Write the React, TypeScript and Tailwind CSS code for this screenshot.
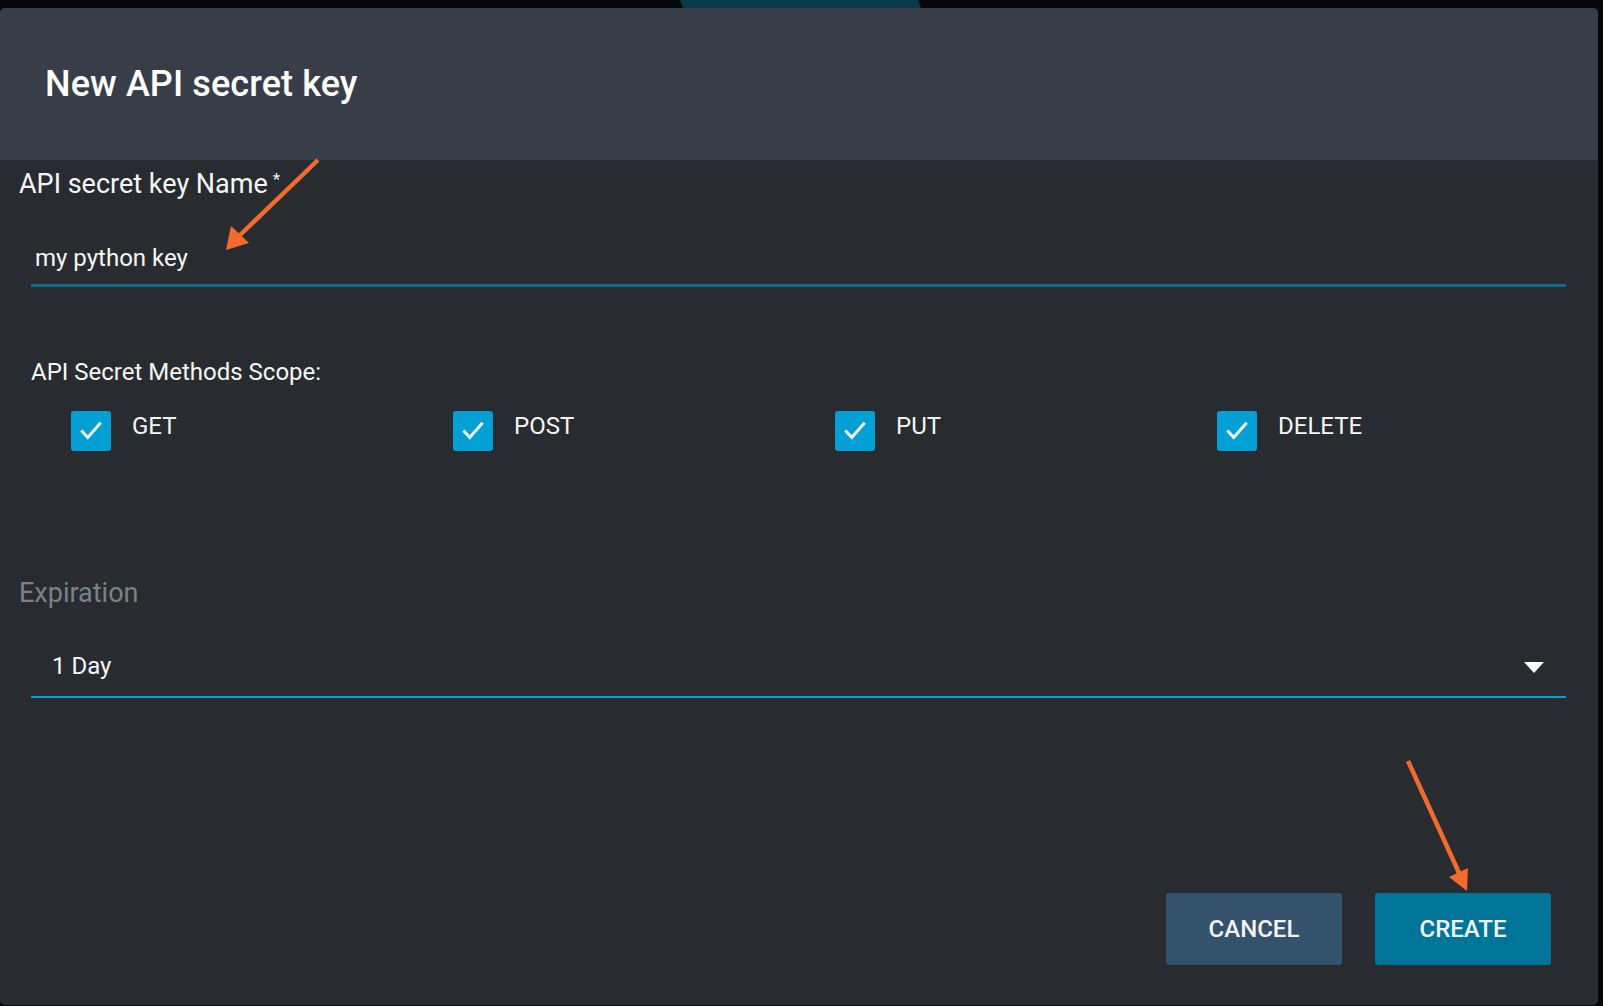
import React from 'react';

const methods = ['GET', 'POST', 'PUT', 'DELETE'];

const Check: React.FC = () => (
  <span className="flex h-10 w-10 shrink-0 items-center justify-center rounded-[3px] bg-[#02a0d4]">
    <svg width="26" height="26" viewBox="0 0 24 24" fill="none">
      <path d="M4 12.5l5 5.5L20 5.5" stroke="#eef8fc" strokeWidth="2.8" strokeLinecap="square" />
    </svg>
  </span>
);

const App: React.FC = () => {
  return (
    <div
      className="relative h-[1006px] w-[1603px] overflow-hidden bg-[#05080b] pt-2 pr-[5px]"
      style={{ fontFamily: 'Roboto, "Open Sans", sans-serif' }}
    >
      {/* backdrop art peeking out above the dialog */}
      <div className="absolute left-[680px] top-[-20px] h-[40px] w-[238px] skew-x-[20deg] bg-[#0b3a4d]" />

      <div className="relative flex h-[997px] w-[1598px] flex-col overflow-hidden rounded-[5px] bg-[#282c31] text-[#f5f6f7]">
        <header className="flex h-[152px] shrink-0 items-center bg-[#383e47] pl-[45px]">
          <h2 className="text-[36px] font-medium leading-[40px] tracking-[0.1px] text-white">New API secret key</h2>
        </header>

        <div className="flex flex-col pl-[31px] pr-[32px]">
          <label className="-ml-[12px] mt-[9px] text-[27px] leading-[30px]">
            API secret key Name<sup className="ml-[5px] text-[17px]">*</sup>
          </label>
          <div className="mt-[45px] border-b-[3px] border-[#086e92] pb-[12px] pl-[4px] text-[24px] leading-[28px]">
            my python key
          </div>

          <div className="mt-[71px] text-[24px] leading-[28px]">API Secret Methods Scope:</div>
          <div className="ml-[40px] mt-[25px] grid grid-cols-[repeat(4,382px)]">
            {methods.map((m) => (
              <div key={m} className="flex items-start">
                <Check />
                <span className="ml-[21px] mt-[1px] text-[24px] leading-[28px]">{m}</span>
              </div>
            ))}
          </div>

          <div className="-ml-[12px] mt-[127px] text-[27px] leading-[30px] text-[#7c8187]">Expiration</div>
          <div className="mt-[44px] flex items-center justify-between border-b-2 border-[#0a9fd4] pb-[16px] pl-[21px] pr-[22px]">
            <span className="text-[24px] leading-[28px]">1 Day</span>
            <svg width="20" height="11" viewBox="0 0 20 11" className="mt-[2px]">
              <path d="M0 0h20L10 11z" fill="#ffffff" />
            </svg>
          </div>

          <div className="mt-[195px] flex justify-end gap-[33px] pr-[15px]">
            <button className="h-[72px] w-[176px] rounded-[3px] bg-[#35526d] text-[24px] font-medium text-[#f2f4f6]">
              CANCEL
            </button>
            <button className="h-[72px] w-[176px] rounded-[3px] bg-[#01749a] text-[24px] font-medium text-[#f2f4f6]">
              CREATE
            </button>
          </div>
        </div>
      </div>

      {/* annotation arrows */}
      <svg className="pointer-events-none absolute inset-0" width="1603" height="1006">
        <line x1="318" y1="160" x2="238" y2="237" stroke="#f26b2d" strokeWidth="4.5" />
        <polygon points="226,250 231,226 249,243" fill="#f26b2d" />
        <line x1="1408" y1="761" x2="1460" y2="875" stroke="#f26b2d" strokeWidth="4.5" />
        <polygon points="1467,891 1449,877 1468,868" fill="#f26b2d" />
      </svg>
    </div>
  );
};

export default App;
